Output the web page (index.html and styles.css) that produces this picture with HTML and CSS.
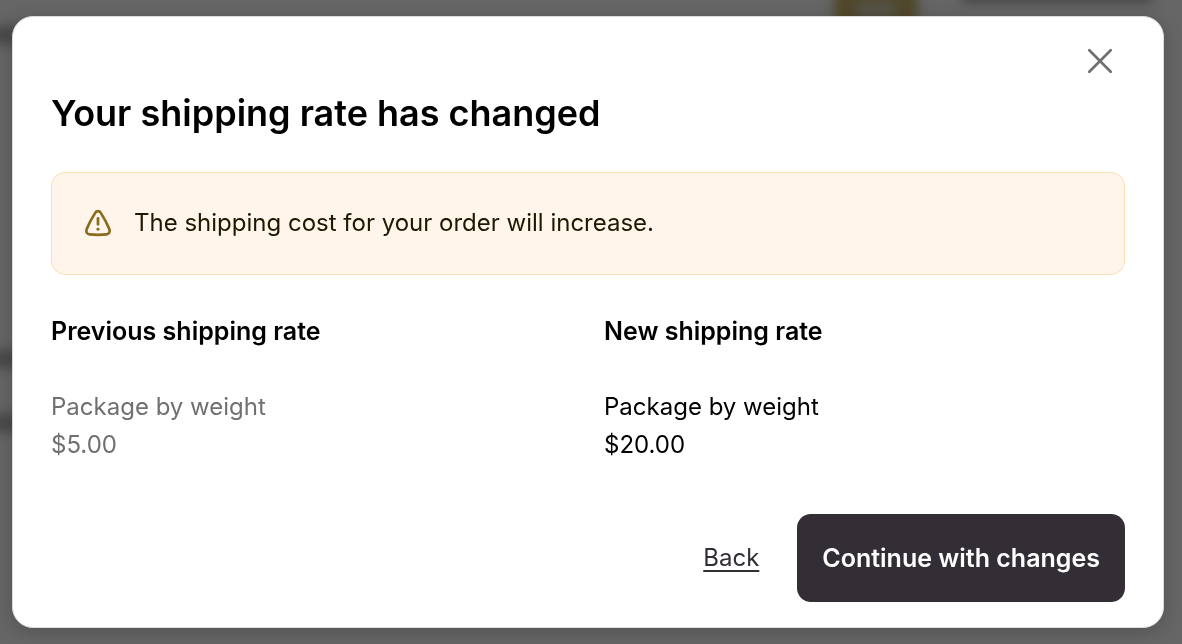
FILE: index.html
```html
<!DOCTYPE html>
<html lang="en">
<head>
    <meta charset="UTF-8">
    <meta name="viewport" content="width=device-width, initial-scale=1.0">
    <title>Your shipping rate has changed</title>
    <link rel="stylesheet" href="styles.css">
</head>
<body>
    <!-- Dimmed checkout page behind the modal -->
    <div class="backdrop" aria-hidden="true">
        <span class="blur product"></span>
        <span class="blur product-name"></span>
        <span class="blur field field-top"></span>
        <span class="blur field field-middle"></span>
        <span class="blur field field-bottom"></span>
    </div>

    <main class="modal" role="dialog" aria-modal="true" aria-labelledby="modalTitle">
        <button class="close-button" type="button" aria-label="Close">
            <svg width="28" height="28" viewBox="0 0 28 28" fill="none" stroke="currentColor" stroke-width="2.7" stroke-linecap="round">
                <path d="M3.3 3.3l21.4 21.4M24.7 3.3L3.3 24.7"/>
            </svg>
        </button>

        <h1 id="modalTitle">Your shipping rate has changed</h1>

        <div class="banner" role="status">
            <svg width="28" height="28" viewBox="-1 -1 30 30" fill="none" stroke="currentColor" stroke-width="2.9" stroke-linecap="round" stroke-linejoin="round">
                <path d="M11.2 2.9C12.4.7 15.6.7 16.8 2.9C20.6 8.8 23.8 14.6 26.2 20.8C27.2 23.6 25.9 25.8 23.2 26.1C17 26.8 11 26.8 4.8 26.1C2.1 25.8.8 23.6 1.8 20.8C4.2 14.6 7.4 8.8 11.2 2.9Z"/>
                <path d="M14 9v6.4"/>
                <circle cx="14" cy="20.8" r="1.6" fill="currentColor" stroke="none"/>
            </svg>
            <p>The shipping cost for your order will increase.</p>
        </div>

        <div class="rates">
            <section class="rate previous">
                <h2>Previous shipping rate</h2>
                <p>Package by weight</p>
                <p>$5.00</p>
            </section>
            <section class="rate">
                <h2>New shipping rate</h2>
                <p>Package by weight</p>
                <p>$20.00</p>
            </section>
        </div>

        <div class="actions">
            <a class="back-link" href="#">Back</a>
            <button class="continue-button" type="button">Continue with changes</button>
        </div>
    </main>
</body>
</html>
```
FILE: styles.css
```css
* {
    box-sizing: border-box;
}

body {
    margin: 0;
    min-height: 100vh;
    padding: 16px 18px 16px 12px;
    font-family: Inter, "Liberation Sans", sans-serif;
    font-size: 24px;
    line-height: 38px;
    color: #000;
    background-color: #666;
}

h1, h2, p {
    margin: 0;
}

/* Page behind the modal */
.backdrop {
    position: fixed;
    inset: 0;
    overflow: hidden;
}

.blur {
    position: absolute;
    filter: blur(6px);
}

.product {
    top: -20px;
    right: 264px;
    width: 84px;
    height: 60px;
    border: 22px solid #51472a;
    background-color: #55554a;
}

.product-name {
    top: -20px;
    right: 30px;
    width: 190px;
    height: 22px;
    background-color: #424242;
}

.field {
    left: -20px;
    width: 40px;
    height: 18px;
    background-color: #484848;
}

.field-top {
    top: 26px;
}

.field-middle {
    top: 350px;
}

.field-bottom {
    top: 414px;
}

/* Modal */
.modal {
    position: relative;
    display: flex;
    flex-direction: column;
    padding: 20px 38px 25px;
    border: 1px solid #ddd;
    border-radius: 21px;
    background-color: #fff;
    box-shadow: 0 4px 20px rgba(0, 0, 0, 0.2);
}

.close-button {
    display: flex;
    align-items: center;
    justify-content: center;
    align-self: flex-end;
    width: 50px;
    height: 48px;
    padding: 0;
    border: none;
    background: none;
    color: #707070;
    cursor: pointer;
}

h1 {
    margin-bottom: 31px;
    font-size: 36px;
    font-weight: 600;
    line-height: 56px;
}

/* Warning banner */
.banner {
    display: flex;
    align-items: center;
    gap: 22px;
    margin-bottom: 37px;
    padding: 31px 32px 32px;
    border: 1px solid #fbdfb5;
    border-radius: 14px;
    background-color: #fff5ea;
    color: #8a6a1c;
}

.banner svg {
    flex: none;
}

.banner p {
    color: #1f1700;
}

/* Rates */
.rates {
    display: grid;
    grid-template-columns: 1fr 1fr;
    gap: 32px;
    margin-bottom: 50px;
}

.rate h2 {
    margin-bottom: 38px;
    font-size: 25px;
    font-weight: 600;
    line-height: 38px;
}

.previous p {
    color: #707070;
}

/* Buttons */
.actions {
    display: flex;
    align-items: center;
    justify-content: flex-end;
    gap: 38px;
}

.back-link {
    color: #332e36;
    text-underline-offset: 4px;
    text-decoration-thickness: 2px;
}

.continue-button {
    padding: 25px;
    border: none;
    border-radius: 14px;
    background-color: #332d35;
    color: #fff;
    font: inherit;
    font-size: 25px;
    font-weight: 600;
    cursor: pointer;
}
```
